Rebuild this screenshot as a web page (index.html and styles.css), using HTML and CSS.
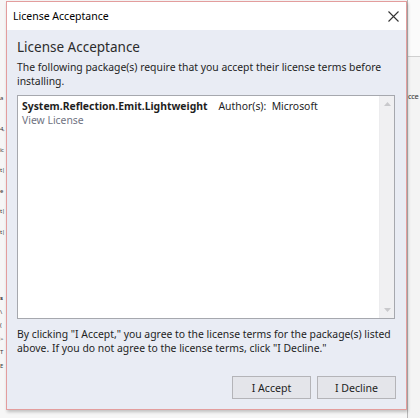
FILE: index.html
```html
<!DOCTYPE html>
<html>
<head>
<meta charset="utf-8">
<title>License Acceptance</title>
<link rel="stylesheet" href="styles.css">
</head>
<body>
<div class="backdrop">
  <div class="bg-left">
    <div class="bg-group g1">
      <div class="frag first">a</div>
      <div class="frag">4,</div>
      <div class="frag">ic</div>
      <div class="frag">t|</div>
      <div class="frag">e</div>
      <div class="frag">t|</div>
      <div class="frag">t|</div>
    </div>
    <div class="bg-group g2">
      <div class="frag bold">s</div>
      <div class="frag">\</div>
      <div class="frag">(</div>
      <div class="frag">&gt;</div>
      <div class="frag">T</div>
      <div class="frag">E</div>
    </div>
  </div>
  <div class="bg-right">
    <div class="bg-right-head"></div>
    <div class="bg-right-text">cce</div>
  </div>
</div>

<div class="dialog">
  <div class="titlebar">
    <span class="title">License Acceptance</span>
    <span class="close" aria-label="Close">
      <svg width="11" height="11" viewBox="0 0 11 11"><path d="M0.5 0.5 L10.5 10.5 M10.5 0.5 L0.5 10.5" stroke="#333" stroke-width="1.1" fill="none"/></svg>
    </span>
  </div>
  <div class="content">
    <h1 class="heading">License Acceptance</h1>
    <p class="intro">The following package(s) require that you accept their license terms before installing.</p>
    <div class="listbox">
      <div class="list-items">
        <div class="package">
          <div class="pkg-line">
            <span class="pkg-name">System.Reflection.Emit.Lightweight</span>
            <span class="pkg-author">Author(s):&nbsp; Microsoft</span>
          </div>
          <span class="view-license">View License</span>
        </div>
      </div>
      <div class="scrollbar">
        <svg class="arrow" width="7" height="4" viewBox="0 0 7 4"><path d="M0 4 L3.5 0 L7 4 Z" fill="#c9c9cc"/></svg>
        <svg class="arrow" width="7" height="4" viewBox="0 0 7 4"><path d="M0 0 L3.5 4 L7 0 Z" fill="#c9c9cc"/></svg>
      </div>
    </div>
    <p class="notice">By clicking "I Accept," you agree to the license terms for the package(s) listed above. If you do not agree to the license terms, click "I Decline."</p>
    <div class="actions">
      <button class="btn">I Accept</button>
      <button class="btn">I Decline</button>
    </div>
  </div>
</div>
</body>
</html>
```
FILE: styles.css
```css
* {
  box-sizing: border-box;
}

html, body {
  margin: 0;
  padding: 0;
}

body {
  width: 420px;
  height: 418px;
  position: relative;
  overflow: hidden;
  background: #f6f6f6;
  font-family: "Noto Sans", "Open Sans", sans-serif;
  color: #1e1e1e;
}

/* background application peeking out */
.backdrop {
  display: flex;
  justify-content: space-between;
  height: 100%;
}

.bg-left {
  width: 6px;
  padding-top: 90px;
  font-size: 6px;
  color: #333;
}

.bg-group {
  display: flex;
  flex-direction: column;
}

.g1 .frag {
  height: 20.5px;
  line-height: 16px;
}

.g1 .first {
  height: 31px;
}

.g2 {
  margin-top: 47px;
}

.g2 .frag {
  height: 13.6px;
  line-height: 14px;
}

.frag {
  white-space: nowrap;
  letter-spacing: -0.5px;
}

.bold {
  font-weight: 700;
}

.bg-right {
  width: 13px;
  border-left: 1px solid #b8b8b8;
  background: #f4f4f4;
  color: #333;
}

.bg-right-head {
  height: 57px;
  border-bottom: 1px solid #d0d0d0;
  background: #fbfbfb;
}

.bg-right-text {
  margin-top: 34px;
  white-space: nowrap;
  font-size: 7.5px;
  letter-spacing: -0.4px;
}

/* dialog */
.dialog {
  position: absolute;
  left: 6px;
  top: 1px;
  width: 401px;
  height: 409px;
  border: 1px solid #e39d9d;
  background: #e9ecf4;
  display: flex;
  flex-direction: column;
  box-shadow: 1px 2px 3px rgba(0, 0, 0, 0.22);
}

.titlebar {
  height: 28px;
  flex: none;
  background: #ffffff;
  display: flex;
  align-items: center;
  justify-content: space-between;
  padding: 0 7px 0 6px;
}

.title {
  font-size: 10.5px;
  color: #000;
}

.close {
  display: flex;
  width: 11px;
  height: 11px;
}

.content {
  flex: 1;
  display: flex;
  flex-direction: column;
  padding: 8px 10px 10px 10px;
}

.heading {
  margin: 0;
  font-size: 13.5px;
  line-height: 18px;
  font-weight: 400;
  color: #2b2b2b;
}

.intro,
.notice {
  margin: 4px 0 0 0;
  font-size: 10.4px;
  line-height: 14px;
  color: #1e1e1e;
}

.listbox {
  margin-top: 7px;
  height: 224px;
  flex: none;
  margin-right: 1px;
  border: 1px solid #a6a8ae;
  background: #ffffff;
  display: flex;
}

.list-items {
  flex: 1;
  padding: 3px 4px;
}

.pkg-line {
  display: flex;
  gap: 11px;
  font-size: 10.4px;
  line-height: 14px;
}

.pkg-name {
  font-weight: 700;
}

.view-license {
  display: block;
  font-size: 10.4px;
  line-height: 14px;
  color: #707382;
}

.scrollbar {
  width: 15px;
  background: #f0f0f2;
  border-left: 1px solid #ececee;
  display: flex;
  flex-direction: column;
  justify-content: space-between;
  align-items: center;
  padding: 6px 0 6px;
}

.notice {
  margin-top: 8px;
}

.actions {
  margin-top: auto;
  display: flex;
  justify-content: flex-end;
  gap: 6px;
}

.btn {
  width: 79px;
  height: 23px;
  border: 1px solid #b4b4b8;
  background: #e4e5ea;
  font-family: inherit;
  font-size: 10.6px;
  color: #1e1e1e;
  padding: 0;
}
```
